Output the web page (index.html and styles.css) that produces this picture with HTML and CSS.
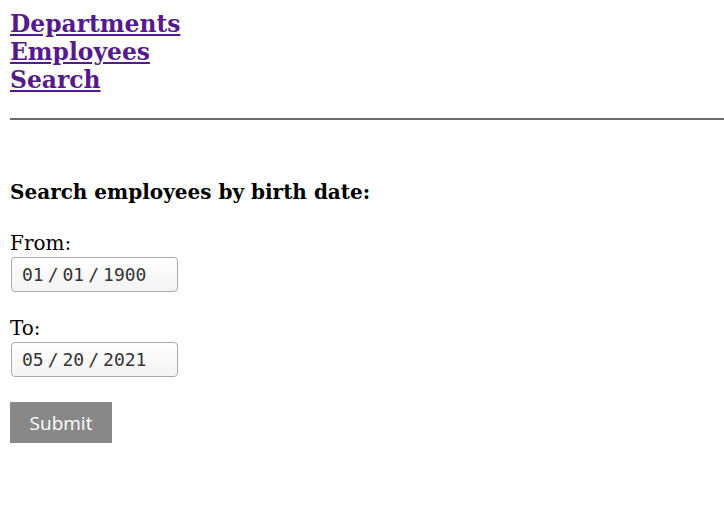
FILE: index.html
```html
<!DOCTYPE html>
<html>
<head>
<meta charset="utf-8">
<link rel="stylesheet" href="styles.css">
</head>
<body>
<nav class="nav">
  <a href="#">Departments</a>
  <a href="#">Employees</a>
  <a href="#">Search</a>
</nav>
<hr class="rule">
<main class="content">
  <h2 class="title">Search employees by birth date:</h2>
  <form class="form">
    <label class="field">
      <span class="label">From:</span>
      <span class="date"><span>01</span><span class="sep">/</span><span>01</span><span class="sep">/</span><span>1900</span></span>
    </label>
    <label class="field">
      <span class="label">To:</span>
      <span class="date"><span>05</span><span class="sep">/</span><span>20</span><span class="sep">/</span><span>2021</span></span>
    </label>
    <button type="button" class="submit">Submit</button>
  </form>
</main>
</body>
</html>
```

FILE: styles.css
```css
html, body {
  margin: 0;
  padding: 0;
  background: #fff;
}
body {
  padding: 10px 0 0 10px;
  font-family: "DejaVu Serif", serif;
  color: #000;
}
.nav {
  display: flex;
  flex-direction: column;
  align-items: flex-start;
}
.nav a {
  font-size: 23.4px;
  line-height: 28px;
  font-weight: bold;
  color: #551a8b;
  text-decoration: underline;
}
.rule {
  margin: 24px 0 0 0;
  border: 0;
  height: 2px;
  background: #6b6b6b;
}
.content {
  padding-top: 60px;
}
.title {
  margin: 0;
  font-size: 20px;
  line-height: 24px;
  font-weight: bold;
}
.form {
  display: flex;
  flex-direction: column;
  align-items: flex-start;
  margin-top: 27px;
}
.field {
  display: flex;
  flex-direction: column;
  align-items: flex-start;
  margin-bottom: 24px;
}
.field + .field {
  margin-bottom: 25px;
}
.label {
  font-size: 20px;
  line-height: 24px;
}
.date {
  display: flex;
  align-items: center;
  box-sizing: border-box;
  width: 167px;
  height: 35px;
  margin: 2px 0 0 1px;
  padding: 0 0 0 10px;
  border: 1px solid #aaa;
  border-radius: 4px;
  background: linear-gradient(#fff, #f3f3f3);
  font-family: "DejaVu Sans Mono", monospace;
  font-size: 18px;
  color: #333;
}
.sep {
  margin: 0 4px;
}
.submit {
  width: 102px;
  height: 41px;
  border: 0;
  background: #888;
  color: #fff;
  font-family: "Open Sans", sans-serif;
  font-size: 19px;
  padding: 0;
}
```
